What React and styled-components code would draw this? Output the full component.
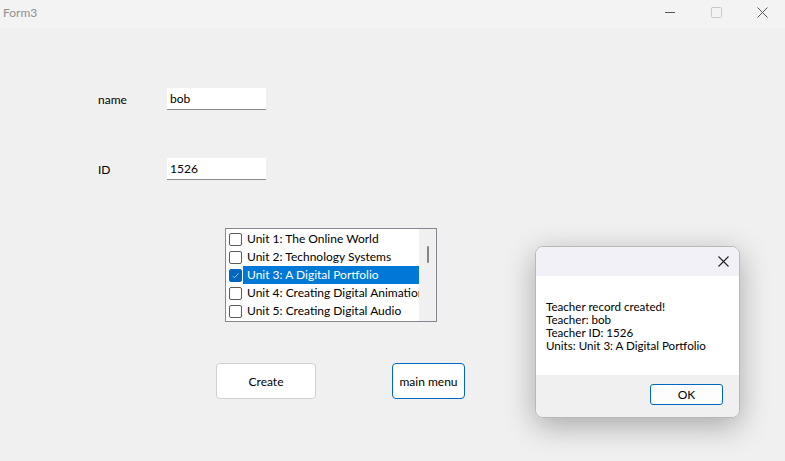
import React from "react"
import styled, { createGlobalStyle } from "styled-components"

const GlobalStyle = createGlobalStyle`
  body {
    margin: 0;
    font-family: "Lato", "Noto Sans", sans-serif;
    font-size: 12px;
    color: #000;
  }
`

const Window = styled.div`
  width: 785px;
  height: 461px;
  display: flex;
  flex-direction: column;
  background: #f0f0f0;
  overflow: hidden;
`

const TitleBar = styled.div`
  height: 28px;
  flex-shrink: 0;
  display: flex;
  align-items: center;
  justify-content: space-between;
  background: #f3f3f3;
`

const Caption = styled.div`
  padding-left: 3px;
  margin-top: -4px;
  color: #909090;
  font-size: 12px;
`

const Controls = styled.div`
  display: flex;
  align-self: stretch;
`

const ControlButton = styled.div`
  width: 46px;
  display: flex;
  align-items: center;
  justify-content: center;
  margin-top: -4px;
`

const Body = styled.div`
  position: relative;
  flex: 1;
  padding: 60px 0 0 98px;
`

const FieldRow = styled.div`
  display: flex;
  align-items: center;
  height: 22px;
  margin-bottom: ${p => p.gap}px;
`

const Label = styled.div`
  width: 69px;
`

const TextBox = styled.div`
  box-sizing: border-box;
  width: 99px;
  height: 22px;
  background: #fff;
  border-bottom: 1px solid #8a8a8a;
  padding: 3px 0 0 3px;
`

const ListBox = styled.div`
  box-sizing: border-box;
  margin-left: 127px;
  width: 212px;
  height: 94px;
  border: 1px solid #828790;
  background: #fff;
  display: flex;
`

const Items = styled.div`
  flex: 1;
  min-width: 0;
  padding-top: 1px;
`

const Item = styled.div`
  height: 18px;
  display: flex;
  align-items: center;
  padding-left: 3px;
  white-space: nowrap;
  overflow: hidden;
`

const Check = styled.span`
  box-sizing: border-box;
  width: 13px;
  height: 13px;
  flex-shrink: 0;
  border-radius: 2px;
  border: 1px solid ${p => (p.checked ? "#0067c0" : "#5c5c5c")};
  background: ${p => (p.checked ? "#0067c0" : "#fff")};
  display: flex;
  align-items: center;
  justify-content: center;
  margin-right: 1px;
`

const ItemText = styled.span`
  flex: 1;
  min-width: 0;
  height: 18px;
  line-height: 18px;
  padding-left: 4px;
  background: ${p => (p.selected ? "#0078d7" : "transparent")};
  color: ${p => (p.selected ? "#fff" : "#000")};
  overflow: hidden;
`

const ScrollBar = styled.div`
  width: 17px;
  flex-shrink: 0;
  background: #f0f0f0;
  display: flex;
  justify-content: center;
  padding-top: 17px;
`

const Thumb = styled.div`
  width: 2px;
  height: 17px;
  background: #858585;
  border-radius: 1px;
`

const ButtonRow = styled.div`
  display: flex;
  gap: 76px;
  margin: 41px 0 0 118px;
`

const Button = styled.div`
  box-sizing: border-box;
  width: ${p => p.w}px;
  height: 36px;
  display: flex;
  align-items: center;
  justify-content: center;
  background: #fff;
  border: 1px solid ${p => (p.focused ? "#0067c0" : "#d0d0d0")};
  border-radius: 4px;
`

const Dialog = styled.div`
  position: absolute;
  left: 535px;
  top: 218px;
  box-sizing: border-box;
  width: 205px;
  height: 172px;
  display: flex;
  flex-direction: column;
  border: 1px solid #b8b8b8;
  border-radius: 8px;
  overflow: hidden;
  box-shadow: 0 8px 30px rgba(0, 0, 0, 0.3);
`

const DialogTitle = styled.div`
  height: 29px;
  background: #f3f1f8;
  display: flex;
  justify-content: flex-end;
  align-items: center;
  padding-right: 10px;
`

const DialogBody = styled.div`
  height: 99px;
  background: #fff;
  padding: 24px 0 0 10px;
  box-sizing: border-box;
  font-size: 11.6px;
  line-height: 13px;
`

const DialogFooter = styled.div`
  flex: 1;
  background: #f0f0f0;
  display: flex;
  justify-content: flex-end;
  align-items: flex-start;
  padding: 9px 16px 0 0;
`

const OkButton = styled.div`
  box-sizing: border-box;
  width: 73px;
  height: 21px;
  border: 1px solid #0067c0;
  border-radius: 3px;
  background: #fdfdfd;
  display: flex;
  align-items: center;
  justify-content: center;
`

const units = [
  "Unit 1: The Online World",
  "Unit 2: Technology Systems",
  "Unit 3: A Digital Portfolio",
  "Unit 4: Creating Digital Animation",
  "Unit 5: Creating Digital Audio",
]

export default function App() {
  return (
    <Window>
      <GlobalStyle />
      <TitleBar>
        <Caption>Form3</Caption>
        <Controls>
          <ControlButton>
            <svg width="10" height="10" viewBox="0 0 10 10">
              <path d="M0 5.5h10" stroke="#555" strokeWidth="1" />
            </svg>
          </ControlButton>
          <ControlButton>
            <svg width="11" height="11" viewBox="0 0 11 11">
              <rect x="0.5" y="0.5" width="10" height="10" rx="1" fill="none" stroke="#c8c8c8" />
            </svg>
          </ControlButton>
          <ControlButton>
            <svg width="11" height="11" viewBox="0 0 11 11">
              <path d="M0.5 0.5l10 10M10.5 0.5l-10 10" stroke="#555" strokeWidth="1" />
            </svg>
          </ControlButton>
        </Controls>
      </TitleBar>
      <Body>
        <FieldRow gap={48}>
          <Label>name</Label>
          <TextBox>bob</TextBox>
        </FieldRow>
        <FieldRow gap={48}>
          <Label>ID</Label>
          <TextBox>1526</TextBox>
        </FieldRow>
        <ListBox>
          <Items>
            {units.map((u, i) => (
              <Item key={u}>
                <Check checked={i === 2}>
                  {i === 2 && (
                    <svg width="9" height="9" viewBox="0 0 9 9">
                      <path d="M1.5 4.8l2 2 4-4.5" fill="none" stroke="#9cc3ea" strokeWidth="1" />
                    </svg>
                  )}
                </Check>
                <ItemText selected={i === 2}>{u}</ItemText>
              </Item>
            ))}
          </Items>
          <ScrollBar>
            <Thumb />
          </ScrollBar>
        </ListBox>
        <ButtonRow>
          <Button w={100}>Create</Button>
          <Button w={73} focused>main menu</Button>
        </ButtonRow>
        <Dialog>
          <DialogTitle>
            <svg width="11" height="11" viewBox="0 0 11 11">
              <path d="M0.5 0.5l10 10M10.5 0.5l-10 10" stroke="#222" strokeWidth="1.1" />
            </svg>
          </DialogTitle>
          <DialogBody>
            Teacher record created!<br />
            Teacher: bob<br />
            Teacher ID: 1526<br />
            Units: Unit 3: A Digital Portfolio
          </DialogBody>
          <DialogFooter>
            <OkButton>OK</OkButton>
          </DialogFooter>
        </Dialog>
      </Body>
    </Window>
  )
}
